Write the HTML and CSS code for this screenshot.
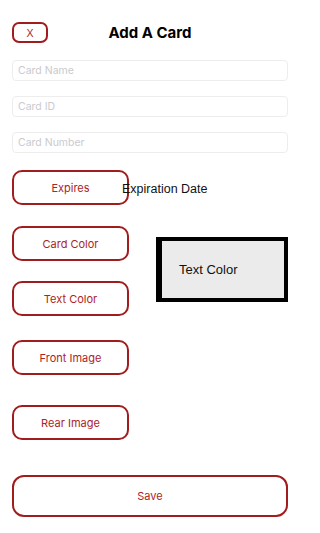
FILE: index.html
```html
<!DOCTYPE html>
<html>
<head>
<meta charset="utf-8">
<link rel="stylesheet" href="styles.css">
</head>
<body>
<div class="page">
  <div class="header">
    <button class="btn btn-close">X</button>
    <h1 class="title">Add A Card</h1>
  </div>
  <div class="fields">
    <input class="field" placeholder="Card Name">
    <input class="field" placeholder="Card ID">
    <input class="field" placeholder="Card Number">
  </div>
  <div class="expires-row">
    <button class="btn btn-side">Expires</button>
    <span class="exp-label">Expiration Date</span>
  </div>
  <div class="colors">
    <div class="color-buttons">
      <button class="btn btn-side">Card Color</button>
      <button class="btn btn-side">Text Color</button>
    </div>
    <div class="preview">Text Color</div>
  </div>
  <button class="btn btn-side front">Front Image</button>
  <button class="btn btn-side rear">Rear Image</button>
  <button class="btn btn-save">Save</button>
</div>
</body>
</html>
```

FILE: styles.css
```css
* { box-sizing: border-box; }
html, body { margin: 0; padding: 0; background: #fff; }
body { font-family: Inter, "Liberation Sans", sans-serif; }
.page {
  width: 300px;
  padding: 22px 12px 0 12px;
  display: flex;
  flex-direction: column;
}
.header {
  position: relative;
  height: 21px;
  display: flex;
  align-items: center;
}
.title {
  position: absolute;
  left: 0; right: 0;
  top: 0;
  margin: 0;
  text-align: center;
  font-size: 15px;
  line-height: 21px;
  font-weight: 700;
  color: #000;
  pointer-events: none;
}
.btn {
  background: #fff;
  border: 2px solid #a11d1d;
  color: #ad2426;
  font-family: Inter, "Liberation Sans", sans-serif;
  font-size: 11px;
  padding: 0;
  cursor: pointer;
}
.btn-close {
  width: 36px;
  height: 21px;
  border-radius: 7px;
  font-size: 10.5px;
  font-family: "Liberation Sans", sans-serif;
}
.fields {
  margin-top: 17px;
  display: flex;
  flex-direction: column;
  gap: 15px;
}
.field {
  width: 276px;
  height: 21px;
  border: 1px solid #ededed;
  border-radius: 4px;
  padding: 0 5px;
  font-family: Inter, "Liberation Sans", sans-serif;
  font-size: 10.5px;
  outline: none;
}
.field::placeholder { color: #cacace; }
.btn-side {
  width: 117px;
  height: 35px;
  border-radius: 10px;
}
.expires-row {
  margin-top: 17px;
  display: flex;
  align-items: center;
}
.exp-label {
  margin-left: -7px;
  margin-top: 3px;
  font-family: "Liberation Sans", sans-serif;
  font-size: 12.5px;
  color: #111;
}
.colors {
  margin-top: 21px;
  display: flex;
  align-items: flex-start;
}
.color-buttons {
  display: flex;
  flex-direction: column;
  gap: 20px;
}
.preview {
  margin-left: 27px;
  margin-top: 11px;
  width: 132px;
  height: 65px;
  background: #ebebeb;
  border-style: solid;
  border-color: #000;
  border-width: 4px 4px 4px 6px;
  display: flex;
  align-items: center;
  padding-left: 17px;
  font-family: "Liberation Sans", sans-serif;
  font-size: 13px;
  color: #111;
}
.front { margin-top: 24px; }
.rear { margin-top: 30px; }
.btn-save {
  margin-top: 35px;
  width: 276px;
  height: 42px;
  border-radius: 12px;
}
```
